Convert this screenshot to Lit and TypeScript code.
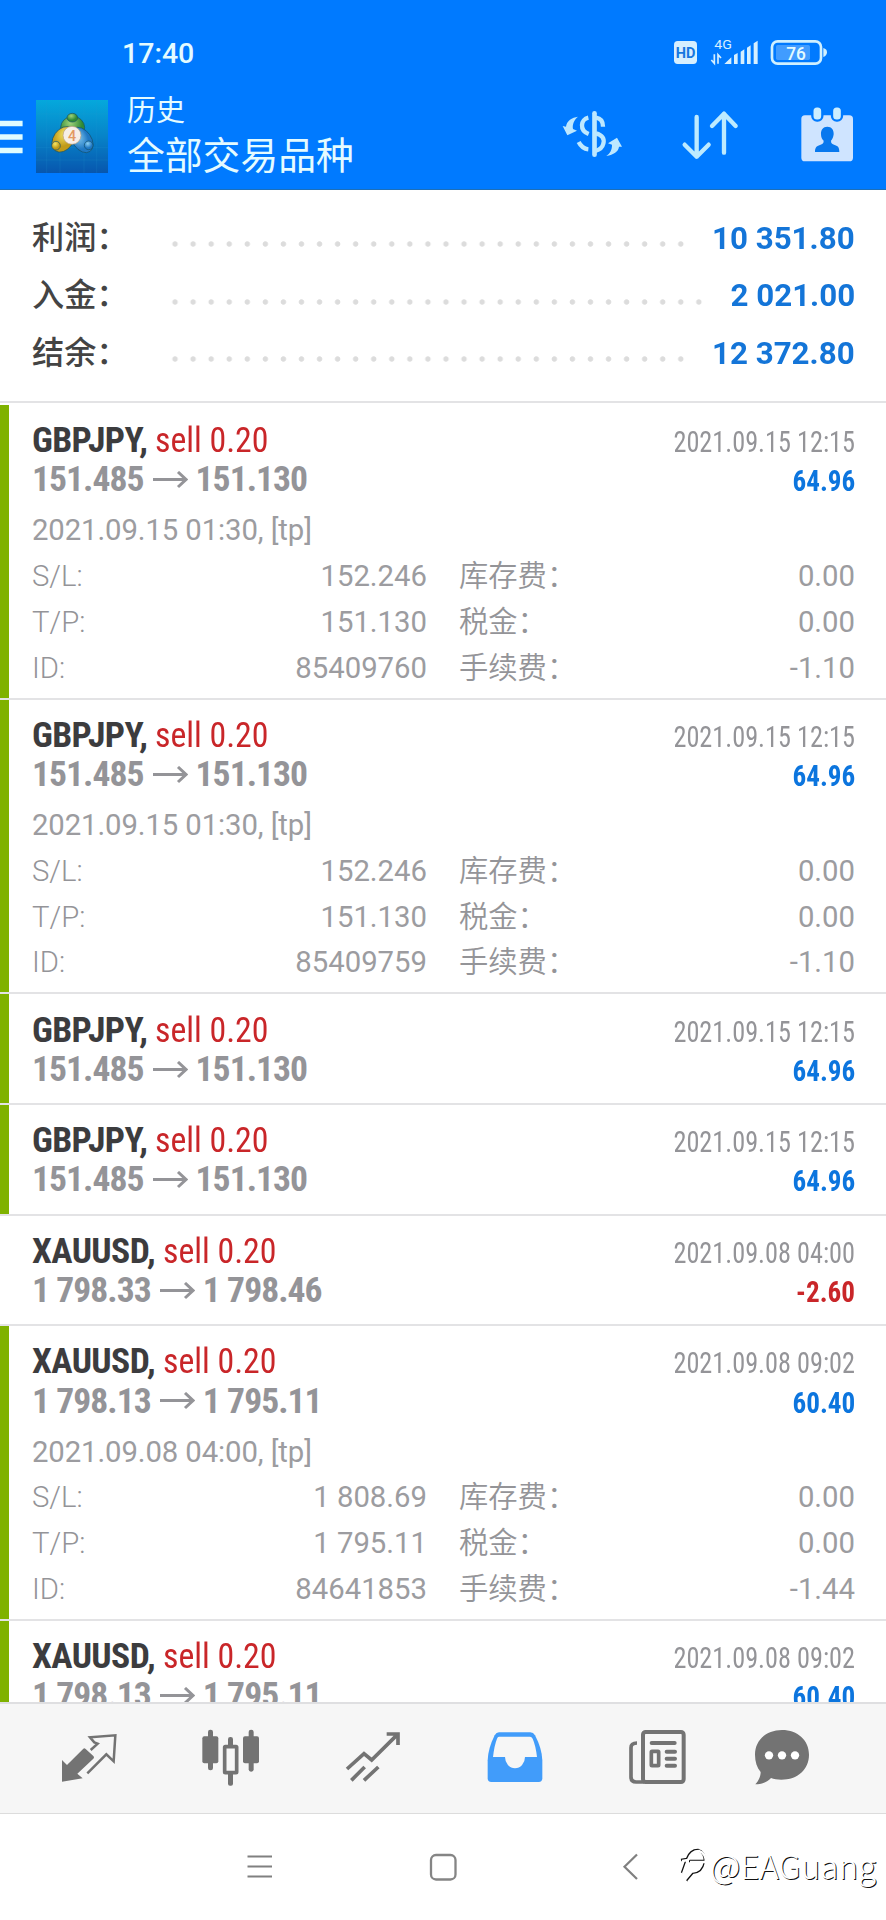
import { LitElement, html, svg, css, nothing } from "lit";
import { customElement, property } from "lit/decorators.js";
import { classMap } from "lit/directives/class-map.js";

interface Deal {
  symbol: string;
  from: string;
  to: string;
  closed: string;
  profit: string;
  loss?: boolean;
  opened?: string;
  sl?: string;
  tp?: string;
  id?: string;
  fee?: string;
}

const DEALS: Deal[] = [
  { symbol: "GBPJPY", from: "151.485", to: "151.130", closed: "2021.09.15 12:15", profit: "64.96", opened: "2021.09.15 01:30, [tp]", sl: "152.246", tp: "151.130", id: "85409760", fee: "-1.10" },
  { symbol: "GBPJPY", from: "151.485", to: "151.130", closed: "2021.09.15 12:15", profit: "64.96", opened: "2021.09.15 01:30, [tp]", sl: "152.246", tp: "151.130", id: "85409759", fee: "-1.10" },
  { symbol: "GBPJPY", from: "151.485", to: "151.130", closed: "2021.09.15 12:15", profit: "64.96" },
  { symbol: "GBPJPY", from: "151.485", to: "151.130", closed: "2021.09.15 12:15", profit: "64.96" },
  { symbol: "XAUUSD", from: "1 798.33", to: "1 798.46", closed: "2021.09.08 04:00", profit: "-2.60", loss: true },
  { symbol: "XAUUSD", from: "1 798.13", to: "1 795.11", closed: "2021.09.08 09:02", profit: "60.40", opened: "2021.09.08 04:00, [tp]", sl: "1 808.69", tp: "1 795.11", id: "84641853", fee: "-1.44" },
  { symbol: "XAUUSD", from: "1 798.13", to: "1 795.11", closed: "2021.09.08 09:02", profit: "60.40" },
];

@customElement("deal-row")
export class DealRow extends LitElement {
  @property({ attribute: false }) deal!: Deal;

  static styles = css`
    :host { display: block; border-bottom: 2.5px solid #e3e3e5; }
    .deal {
      box-sizing: border-box;
      height: 108.6px;
      padding: 16.200px 31px 0 23px;
      border-left: 9px solid #7fb200;
      background: #fff;
      color: #949498;
      overflow: hidden;
    }
    .deal.open { height: 292.7px; }
    .deal.loss { border-left-color: #fff; }
    .line {
      display: flex;
      justify-content: space-between;
      align-items: baseline;
      height: 39.3px;
      line-height: 39.3px;
      font-family: "Roboto Condensed", Roboto, sans-serif;
      font-stretch: 75%;
      font-size: 35.6px;
      white-space: pre;
    }
    .symbol { font-weight: 700; color: #3c3c3e; letter-spacing: -.6px; }
    .side { display: inline-block; color: #c92629; transform: scaleX(.95); transform-origin: left; }
    .prices { font-weight: 700; display: flex; align-items: baseline; letter-spacing: -.95px; }
    .prices svg { flex: none; width: 35px; height: 18px; margin: 0 8px 0 9px; align-self: center; }
    .date { font-size: 29.5px; transform: scaleX(.89); transform-origin: right; }
    .profit { font-size: 29.5px; font-weight: 700; color: #0c75de; transform: scaleX(.92); transform-origin: right; }
    .deal.loss .profit { color: #c92629; }
    .details {
      margin-top: 8.700px;
      display: grid;
      grid-template-columns: 395px 1fr;
      column-gap: 32px;
      font: 400 29.300px/45.7px Roboto, "Noto Sans CJK SC", sans-serif;
      color: #9c9ca0;
      white-space: nowrap;
    }
    .opened { grid-column: 1 / 3; letter-spacing: -.1px; }
    .pair { display: flex; justify-content: space-between; }
    .pair span:first-child { font-weight: 350; color: #949498; }
  `;

  private pair(label: string, value?: string) {
    return html`<div class="pair"><span>${label}</span><span>${value}</span></div>`;
  }

  render() {
    const d = this.deal;
    return html`
      <div class=${classMap({ deal: true, open: !!d.opened, loss: !!d.loss })}>
        <div class="line">
          <span><span class="symbol">${d.symbol}, </span><span class="side">sell 0.20</span></span>
          <span class="date">${d.closed}</span>
        </div>
        <div class="line">
          <span class="prices"><span>${d.from}</span><svg viewBox="0 0 35 18"><path d="M0 8.500H33M25 1L33 8.500L25 16" fill="none" stroke="#949498" stroke-width="3"/></svg><span>${d.to}</span></span>
          <span class="profit">${d.profit}</span>
        </div>
        ${d.opened
          ? html`<div class="details">
              <div class="opened">${d.opened}</div>
              ${this.pair("S/L:", d.sl)}${this.pair("库存费：", "0.00")}
              ${this.pair("T/P:", d.tp)}${this.pair("税金：", "0.00")}
              ${this.pair("ID:", d.id)}${this.pair("手续费：", d.fee)}
            </div>`
          : nothing}
      </div>`;
  }
}

const TABS = [
  { x: 162, art: svg`<path d="M186 419L201 434L250 385Q253 382 257 386L280 407Q284 411 280 415L232 460L248 474L186 484Z" fill="#737373"/><path d="M272 389L293 370L283 366L270 351L346 345L341 423L319 402L262 459" fill="none" stroke="#737373" stroke-width="7.500"/>` },
  { x: 588, art: svg`<g fill="#737373"><rect x="607" y="348" width="48" height="81" rx="6"/><rect x="624" y="328" width="15" height="122" rx="7"/><rect x="729" y="348" width="48" height="81" rx="6"/><rect x="746" y="328" width="15" height="126" rx="7"/><rect x="684" y="350" width="15" height="40" rx="7"/><rect x="684" y="450" width="15" height="46" rx="6"/></g><rect x="674" y="379" width="36" height="78" rx="2" fill="#f6f6f6" stroke="#737373" stroke-width="11"/>` },
  { x: 1014, art: svg`<path d="M1041 446L1092 400L1115 419L1192 343M1160 341H1194V374M1054 480L1094 440M1092 480L1135 440" fill="none" stroke="#737373" stroke-width="11"/>` },
  { x: 111, art: svg`<path d="M168 336H262Q271 336 276 345Q297 385 298 420V474Q298 485 287 485H145Q134 485 134 474V420Q135 385 155 345Q160 336 168 336Z" fill="#419cfa"/><path d="M168 349H261Q266 349 269 355Q278 375 282 410H246A30 34 0 0 1 186 410H150Q154 375 162 355Q164 349 168 349Z" fill="#f6f6f6"/>` },
  { x: 537, art: svg`<g fill="none" stroke="#737373"><rect x="600" y="335" width="122" height="150" rx="8" stroke-width="12"/><path d="M582 368Q564 368 564 382V470Q564 485 579 485H604" stroke-width="11"/><path d="M626 368H695M671 394H696M671 415H696M671 436H696" stroke-width="12" stroke-linecap="round"/><rect x="625" y="393" width="22" height="43" rx="2" stroke-width="11"/></g>` },
  { x: 912, art: svg`<path d="M1017 329C1064 329 1098 360 1098 403C1098 447 1064 478 1015 478C1003 478 992 476 984 473C974 485 956 492 937 492C948 480 953 467 953 455C942 442 936 424 936 403C936 360 970 329 1017 329Z" fill="#737373"/><g fill="#fff"><circle cx="978" cy="405" r="12.500"/><circle cx="1017" cy="405" r="12.500"/><circle cx="1056" cy="405" r="12.500"/></g>` },
];

@customElement("app-root")
export class AppRoot extends LitElement {
  static styles = css`
    :host {
      display: flex;
      flex-direction: column;
      width: 886px;
      height: 1920px;
      overflow: hidden;
      background: #fff;
      font-family: Roboto, "Noto Sans CJK SC", sans-serif;
    }
    svg { display: block; flex: none; }
    .top {
      flex: none;
      height: 189.5px;
      background: #007aff;
      color: #e4fbff;
      border-bottom: 1px solid #1d6fb8;
      box-sizing: border-box;
    }
    .status { display: flex; height: 85px; padding: 0 58px 0 122px; align-items: flex-start; }
    .time { font-size: 28.5px; font-weight: 500; line-height: 107px; flex: 1; }
    .status svg { margin-top: 36px; }
    .bar { display: flex; align-items: flex-start; }
    .menu { margin-top: 35px; }
    .logo { margin: 14.5px 0 0 13px; }
    .titles { margin: 4px 0 0 19px; flex: 1; white-space: nowrap; }
    .small { font-size: 29px; line-height: 44px; }
    .large { font-size: 37.8px; line-height: 46px; }
    .actions { display: flex; gap: 52.300px; padding: 21px 28px 0 0; }
    .summary {
      flex: none;
      box-sizing: border-box;
      height: 213px;
      padding: 20px 31px 0 32px;
      border-bottom: 2.5px solid #e3e3e5;
      margin-bottom: 2.5px;
    }
    .sum { display: flex; height: 57.5px; line-height: 57.5px; font-size: 32.2px; }
    .label { width: 134px; font-weight: 500; color: #444; white-space: nowrap; }
    .dots {
      height: 6px;
      margin-top: 31.5px;
      background: radial-gradient(circle at center, #dcdcdc 2.300px, transparent 3.100px) 0 0 / 18.070px 6px repeat-x;
    }
    .value { margin-left: auto; font-weight: 700; color: #1475d8; transform: scaleX(.973); transform-origin: right; }
    .list { flex: 1; min-height: 0; overflow: hidden; }
    .tabs {
      flex: none;
      box-sizing: border-box;
      height: 111.5px;
      border-top: 2.5px solid #dfdfe1;
      border-bottom: 1px solid #dcdcdc;
      background: #f6f6f6;
      padding: 22.500px 0 0 54px;
      display: flex;
      gap: 72px;
    }
    .tabs svg:last-child { margin-left: -17.400px; }
    .system { box-sizing: border-box; position: relative; flex: none; height: 106.5px; display: flex; padding: 38px 0 0 242px; }
    .system svg { margin-right: 147px; }
    .system .back { margin: 0 0 0 4px; }
    .mark {
      position: absolute;
      left: 679px;
      top: 28px;
      display: flex;
      align-items: center;
      color: #fff;
      font: 300 33.200px/46px "Noto Sans CJK SC", sans-serif;
      text-shadow: 1px 1px 0.600px #111;
      white-space: nowrap;
    }
    .system .mark svg { margin: 0 -1px 0 0; filter: drop-shadow(-1px -1px 0.300px #111); }
  `;

  private sum(label: string, value: string, dots: number) {
    return html`<div class="sum">
      <span class="label">${label}</span>
      <span class="dots" style="width:${dots * 18.07}px"></span>
      <span class="value">${value}</span>
    </div>`;
  }

  render() {
    return html`
      <header class="top">
        <div class="status">
          <span class="time">17:40</span>
          <svg width="156" height="32" viewBox="684 108 468 96">
            <rect x="690" y="123" width="69" height="69" rx="11" fill="#d6efff"/>
            <text x="724.500" y="175" text-anchor="middle" font-size="42" font-weight="700" fill="#1677e0" textLength="59" lengthAdjust="spacingAndGlyphs">HD</text>
            <text x="811" y="146" font-size="39" fill="#d6efff" textLength="53" lengthAdjust="spacingAndGlyphs">4G</text>
            <path d="M811 163V190L802 180M822 191V164L831 174" fill="none" stroke="#d6efff" stroke-width="5"/>
            <path d="M841 192L862 172V192ZM870 192V165L881 159V192ZM890 192V155L901 148V192ZM909 192V143L920 136V192ZM929 192V130L941 122V192Z" fill="#d6efff"/>
            <rect x="996" y="135" width="102" height="45" rx="5" fill="#419cff"/>
            <rect x="984" y="124" width="147" height="67" rx="17" fill="none" stroke="#d0f0ff" stroke-width="8"/>
            <path d="M1138 144Q1149 147 1149 157Q1149 167 1138 171Z" fill="#d0f0ff"/>
            <text x="1056" y="180" text-anchor="middle" font-size="56" font-weight="500" fill="#e4fbff" textLength="59" lengthAdjust="spacingAndGlyphs">76</text>
          </svg>
        </div>
        <div class="bar">
          <svg class="menu" width="23" height="34" viewBox="0 0 23 34"><path d="M0 3.500H22.600M0 17H22.600M0 30.500H22.600" stroke="#dffcff" stroke-width="5.400"/></svg>
          <svg class="logo" width="72" height="73" viewBox="108 298 216 219">
            <defs>
              <linearGradient id="sky" x1="0" y1="0" x2="0" y2="1"><stop offset="0" stop-color="#05a8dc"/><stop offset=".5" stop-color="#0783c8"/><stop offset="1" stop-color="#0756ae"/></linearGradient>
              <radialGradient id="g" cx=".4" cy=".3"><stop offset="0" stop-color="#9fd27a"/><stop offset="1" stop-color="#2f8a34"/></radialGradient>
              <radialGradient id="y" cx=".4" cy=".3"><stop offset="0" stop-color="#f4e568"/><stop offset="1" stop-color="#c09a18"/></radialGradient>
              <radialGradient id="b" cx=".4" cy=".3"><stop offset="0" stop-color="#8cd0f2"/><stop offset="1" stop-color="#1f78c4"/></radialGradient>
            </defs>
            <rect x="108" y="298" width="216" height="219" fill="url(#sky)"/>
            <path d="M140 298V517M180 298V517M252 298V517M290 298V517M108 340H324M108 440H324M108 478H324" stroke="#2a9bd6" stroke-opacity=".25" stroke-width="2"/>
            <g stroke="#14506a" stroke-width="2">
              <ellipse cx="218" cy="381" rx="36" ry="34" fill="url(#g)"/>
              <ellipse cx="190" cy="416" rx="30" ry="42" transform="rotate(35 190 416)" fill="url(#y)"/>
              <ellipse cx="246" cy="418" rx="28" ry="42" transform="rotate(-35 246 418)" fill="url(#b)"/>
              <ellipse cx="217" cy="351" rx="16" ry="13" fill="url(#g)"/>
              <circle cx="168" cy="435" r="13" fill="url(#y)"/>
              <circle cx="266" cy="434" r="13" fill="url(#b)"/>
            </g>
            <circle cx="216" cy="404" r="27" fill="#f6efe8" stroke="#b59b78" stroke-width="2"/>
            <text x="216" y="420" text-anchor="middle" font-size="43" font-weight="500" fill="#e39a62">4</text>
          </svg>
          <div class="titles"><div class="small">历史</div><div class="large">全部交易品种</div></div>
          <div class="actions">
            <svg width="64" height="56" viewBox="355 318 192 168">
              <g fill="none" stroke="#bde8ff" stroke-width="13">
                <path d="M455.500 340V464" stroke-width="14" stroke-linecap="round"/>
                <path d="M437 353C414 358 409 391 438 402M408 426Q418 446 437 448M460 353Q481 356 481 380M460 400C479 405 486 416 482 431C479 445 469 450 458 453"/>
              </g>
              <path d="M406 350C388 352 372 362 370 380L360 378L374 406L403 392L391 387C388 372 396 358 406 350ZM491 468C513 464 527 455 529 440L538 440L523 413L496 430L508 434C508 450 502 460 491 468Z" fill="#bde8ff"/>
            </svg>
            <svg width="64" height="56" viewBox="704 318 192 168">
              <path d="M760 351V470M724 434L760 470L796 434M842 458V341M806 378L842 341L877 378" fill="none" stroke="#bdeaff" stroke-width="13" stroke-linecap="round" stroke-linejoin="round"/>
            </svg>
            <svg width="64" height="56" viewBox="1053 318 192 168">
              <rect x="1075" y="346" width="155" height="138" rx="11" fill="#cfe4ff"/>
              <g fill="#cdeeff" stroke="#007aff" stroke-width="7"><rect x="1108" y="319" width="30" height="43" rx="14"/><rect x="1167" y="319" width="30" height="43" rx="14"/></g>
              <path d="M1153 380C1166 380 1173 390 1172 403C1171 412 1168 418 1164 422C1164 430 1167 432 1175 435C1186 438 1189 443 1189 456H1116C1116 443 1120 438 1131 435C1139 432 1142 430 1142 422C1137 418 1134 411 1134 403C1133 390 1140 380 1153 380Z" fill="#0878ee"/>
            </svg>
          </div>
        </div>
      </header>
      <section class="summary">
        ${this.sum("利润：", "10 351.80", 29)}
        ${this.sum("入金：", "2 021.00", 30)}
        ${this.sum("结余：", "12 372.80", 29)}
      </section>
      <main class="list">${DEALS.map((d) => html`<deal-row .deal=${d}></deal-row>`)}</main>
      <nav class="tabs">
        ${TABS.map((t) => html`<svg width="70" height="60" viewBox="${t.x} 320 210 180">${t.art}</svg>`)}
      </nav>
      <footer class="system">
        <svg width="36" height="30" viewBox="-18 -15 36 30"><path d="M-12.500 -10.500H12M-12.500 -.500H12M-12.500 9.500H12" stroke="#808080" stroke-width="2.200"/></svg>
        <svg width="36" height="30" viewBox="-18 -15 36 30"><rect x="-12" y="-12" width="24.500" height="24.500" rx="5" fill="none" stroke="#858585" stroke-width="2.300"/></svg>
        <svg class="back" width="36" height="30" viewBox="-18 -15 36 30"><path d="M7 -12.500L-5.500 -.200L7 12" fill="none" stroke="#808080" stroke-width="2.200"/></svg>
        <div class="mark">
          <svg width="32" height="38" viewBox="0 0 32 38"><path d="M3 15L9 14Q12 5 20 5Q27 7 27 17Q25 28 15 29L9 36M11 16H27M9 14L4 28" fill="none" stroke="#fff" stroke-width="2.500"/></svg>
          <span>@EAGuang</span>
        </div>
      </footer>
    `;
  }
}
